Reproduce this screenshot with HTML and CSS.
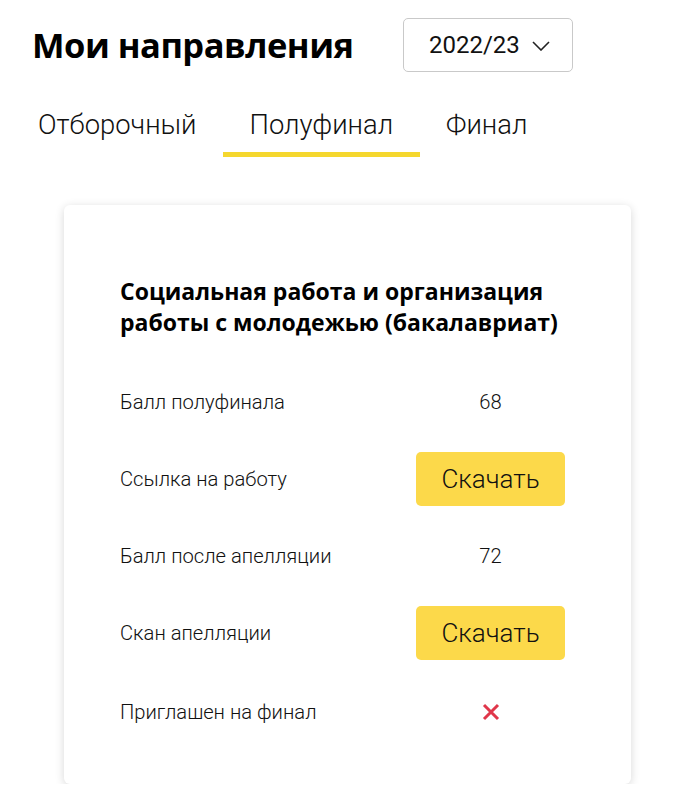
FILE: index.html
```html
<!DOCTYPE html>
<html lang="ru">
<head>
<meta charset="utf-8">
<link rel="stylesheet" href="styles.css">
</head>
<body>
<div class="page">
  <header class="header">
    <h1 class="title">Мои направления</h1>
    <button class="select">
      <span>2022/23</span>
      <svg class="chev" width="18" height="10" viewBox="0 0 18 10"><path d="M1 1 L9 9 L17 1" fill="none" stroke="#222" stroke-width="1.6"/></svg>
    </button>
  </header>
  <nav class="tabs">
    <div class="tab">Отборочный</div>
    <div class="tab active">Полуфинал</div>
    <div class="tab">Финал</div>
  </nav>
  <section class="card">
    <h2 class="card-title">Социальная работа и организация работы с молодежью (бакалавриат)</h2>
    <div class="rows">
      <div class="label">Балл полуфинала</div>
      <div class="value">68</div>
      <div class="label">Ссылка на работу</div>
      <div class="value"><button class="btn">Скачать</button></div>
      <div class="label">Балл после апелляции</div>
      <div class="value">72</div>
      <div class="label">Скан апелляции</div>
      <div class="value"><button class="btn">Скачать</button></div>
      <div class="label last">Приглашен на финал</div>
      <div class="value last">
        <svg width="18" height="18" viewBox="0 0 18 18"><path d="M2 2 L16 16 M16 2 L2 16" stroke="#e0364a" stroke-width="3"/></svg>
      </div>
    </div>
  </section>
</div>
</body>
</html>
```

FILE: styles.css
```css
* { box-sizing: border-box; }
body {
  margin: 0;
  background: #fff;
  font-family: Roboto, "Noto Sans", sans-serif;
  color: #111;
}
.page { width: 695px; }
.header {
  display: flex;
  align-items: center;
  padding: 18px 0 0 32px;
  height: 72px;
}
.title {
  margin: 0;
  font-family: "Open Sans", sans-serif;
  font-weight: 700;
  font-size: 34.5px;
  letter-spacing: -0.5px;
  line-height: 40px;
  width: 371px;
  color: #000;
}
.select {
  display: flex;
  align-items: center;
  gap: 12px;
  width: 170px;
  height: 54px;
  padding: 0 0 0 25px;
  border: 1.5px solid #c9c9c9;
  border-radius: 5px;
  background: #fff;
  font-family: Roboto, sans-serif;
  font-size: 24px;
  color: #111;
}
.chev { margin-top: 2px; }
.tabs {
  display: flex;
  padding-left: 11.5px;
  margin-top: 28px;
}
.tab {
  padding: 0 26.5px;
  height: 57px;
  line-height: 50px;
  font-size: 27.4px;
  font-weight: 300;
  color: #111;
  border-bottom: 5px solid transparent;
}
.tab.active { border-bottom-color: #f5d72e; }
.card {
  margin: 48px 0 0 64px;
  width: 567px;
  height: 579px;
  border-radius: 6px;
  box-shadow: 0 2px 10px rgba(0,0,0,0.16);
  padding: 71px 30px 0 56px;
}
.card-title {
  margin: 0;
  font-family: "Open Sans", sans-serif;
  font-weight: 700;
  font-size: 23px;
  line-height: 31px;
  color: #000;
  width: 470px;
}
.rows {
  display: grid;
  grid-template-columns: 296px 149px;
  grid-auto-rows: 54px;
  row-gap: 23px;
  margin-top: 37px;
}
.label, .value {
  display: flex;
  align-items: center;
  font-size: 20.2px;
  font-weight: 300;
  color: #111;
}
.value { justify-content: center; }
.label.last, .value.last { margin-top: 3px; }
.btn {
  width: 149px;
  height: 54px;
  border: none;
  border-radius: 5px;
  background: #fcd94a;
  font-family: Roboto, sans-serif;
  font-weight: 300;
  font-size: 26px;
  color: #111;
}
```
